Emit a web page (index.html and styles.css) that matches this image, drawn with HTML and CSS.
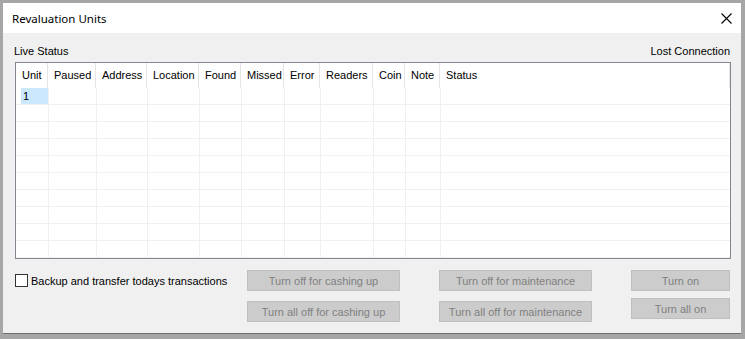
FILE: index.html
```html
<!DOCTYPE html>
<html lang="en">
<head>
  <meta charset="UTF-8" />
  <meta name="viewport" content="width=device-width, initial-scale=1.0"/>
  <title>Revaluation Units</title>
  <link rel="stylesheet" href="styles.css">
</head>
<body>
  <div class="window">
    <div class="titlebar">
      <span class="title">Revaluation Units</span>
      <svg class="close" width="11" height="11" viewBox="0 0 11 11">
        <path d="M0.5 0.5 L10.5 10.5 M10.5 0.5 L0.5 10.5" stroke="#000" stroke-width="1.1" fill="none"/>
      </svg>
    </div>

    <div class="content">
      <div class="status-row">
        <span>Live Status</span>
        <span>Lost Connection</span>
      </div>

      <div class="listview">
        <div class="lv-row lv-head">
          <div>Unit</div>
          <div>Paused</div>
          <div>Address</div>
          <div>Location</div>
          <div>Found</div>
          <div>Missed</div>
          <div>Error</div>
          <div>Readers</div>
          <div>Coin</div>
          <div>Note</div>
          <div>Status</div>
        </div>
        <div id="rows"></div>
      </div>

      <div class="actions">
        <label class="check">
          <span class="box"></span>
          Backup and transfer todays transactions
        </label>
        <div class="btn-col">
          <button class="btn wide" disabled>Turn off for cashing up</button>
          <button class="btn wide" disabled>Turn all off for cashing up</button>
        </div>
        <div class="btn-col">
          <button class="btn wide" disabled>Turn off for maintenance</button>
          <button class="btn wide" disabled>Turn all off for maintenance</button>
        </div>
        <div class="btn-col tight">
          <button class="btn narrow" disabled>Turn on</button>
          <button class="btn narrow" disabled>Turn all on</button>
        </div>
      </div>
    </div>
  </div>

  <script>
    // ten grid rows, only the first holds a unit
    const rows = document.getElementById('rows');
    for (let i = 0; i < 10; i++) {
      const row = document.createElement('div');
      row.className = 'lv-row lv-body';
      for (let c = 0; c < 11; c++) {
        const cell = document.createElement('div');
        if (i === 0 && c === 0) {
          cell.innerHTML = '<span class="selected">1</span>';
        }
        row.appendChild(cell);
      }
      rows.appendChild(row);
    }
  </script>
</body>
</html>
```

FILE: styles.css
```css
:root {
  --face: #f0f0f0;
  --frame: #a6a6a6;
  --grid: #f0f0f0;
  --head-line: #e5e5e5;
  --btn: #cccccc;
  --btn-border: #bfbfbf;
  --btn-text: #808080;
}

* {
  box-sizing: border-box;
}

body {
  margin: 0;
  padding: 3px 4px 4px 3px;
  background: var(--frame);
  font-family: 'Liberation Sans', Arial, sans-serif;
  font-size: 11px;
  color: #000;
}

.window {
  width: 738px;
  height: 331px;
  background: var(--face);
  border-bottom: 1px solid #6e6e6e;
}

.titlebar {
  height: 30px;
  background: #fff;
  display: flex;
  align-items: center;
  justify-content: space-between;
  padding: 0 9px 0 9px;
}

.title {
  font-family: 'Noto Sans', sans-serif;
  font-size: 11.5px;
}

.close {
  display: block;
}

.content {
  padding: 11px 10px 0 12px;
}

.status-row {
  display: flex;
  justify-content: space-between;
  height: 14px;
  line-height: 14px;
  margin-left: -1px;
  margin-right: 1px;
  margin-bottom: 4px;
}

.listview {
  background: #fff;
  border: 1px solid #828790;
  height: 197px;
}

.lv-row {
  display: grid;
  grid-template-columns: 32px 48px 51px 52px 42px 43px 36px 53px 32px 35px 1fr;
}

.lv-head {
  height: 25px;
}

.lv-head div {
  border-right: 1px solid var(--head-line);
  line-height: 24px;
  padding-left: 6px;
  white-space: nowrap;
}

.lv-body {
  height: 17px;
}

.lv-body div {
  border-bottom: 1px solid var(--grid);
  border-left: 1px solid var(--grid);
}

.lv-body div:first-child {
  border-left: none;
}

.selected {
  display: block;
  margin-left: 5px;
  height: 16px;
  line-height: 16px;
  padding-left: 2px;
  background: #cce8ff;
}

.actions {
  display: flex;
  gap: 39px;
  margin-top: 11px;
}

.check {
  display: flex;
  align-items: center;
  gap: 3px;
  width: 193px;
  height: 21px;
  white-space: nowrap;
}

.box {
  width: 13px;
  height: 13px;
  border: 1px solid #333;
  background: #fff;
  flex-shrink: 0;
}

.btn-col {
  display: flex;
  flex-direction: column;
  gap: 10px;
}

.btn-col.tight {
  gap: 7px;
}

.btn {
  height: 21px;
  background: var(--btn);
  border: 1px solid var(--btn-border);
  color: var(--btn-text);
  font-family: inherit;
  font-size: 11px;
  padding: 0;
}

.btn.wide {
  width: 153px;
}

.btn.narrow {
  width: 99px;
}
```
